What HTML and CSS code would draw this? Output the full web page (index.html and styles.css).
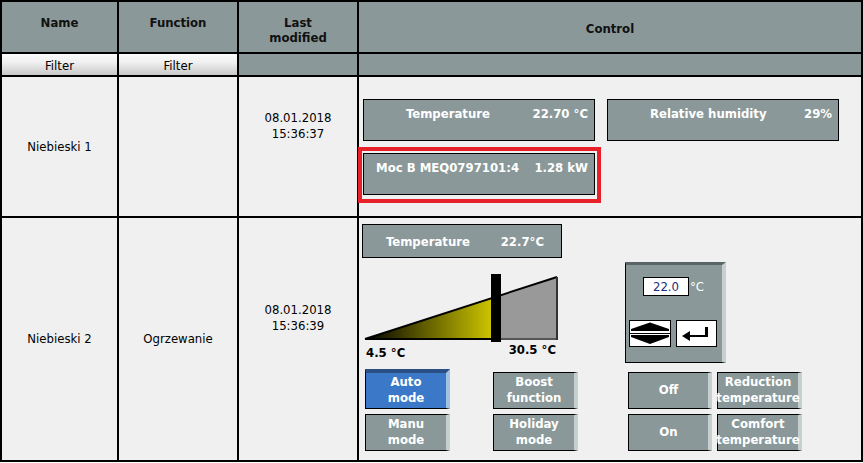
FILE: index.html
```html
<!DOCTYPE html>
<html>
<head>
<meta charset="utf-8">
<link rel="stylesheet" href="styles.css">
</head>
<body>
<div class="grid">
  <div class="hd hd-top">Name</div>
  <div class="hd hd-top">Function</div>
  <div class="hd hd-top">Last<br>modified</div>
  <div class="hd hd-mid">Control</div>

  <div class="filter">Filter</div>
  <div class="filter">Filter</div>
  <div class="hd"></div>
  <div class="hd"></div>

  <div class="cell">Niebieski 1</div>
  <div class="cell"></div>
  <div class="cell"><div class="date">08.01.2018<br>15:36:37</div></div>
  <div class="cell ctl ctl1">
    <div class="boxrow">
      <div class="vbox"><span>Temperature</span><span>22.70 °C</span></div>
      <div class="vbox"><span>Relative humidity</span><span>29%</span></div>
    </div>
    <div class="boxrow second">
      <div class="vbox vbox-moc hl"><span>Moc B MEQ0797101:4</span><span>1.28 kW</span></div>
    </div>
  </div>

  <div class="cell">Niebieski 2</div>
  <div class="cell">Ogrzewanie</div>
  <div class="cell"><div class="date">08.01.2018<br>15:36:39</div></div>
  <div class="cell ctl ctl2">
    <div class="tbox"><span>Temperature</span><span>22.7°C</span></div>
    <div class="rowb">
      <svg class="slider" width="200" height="101" viewBox="0 0 200 101">
        <defs>
          <linearGradient id="yg" x1="3" y1="0" x2="129" y2="0" gradientUnits="userSpaceOnUse">
            <stop offset="0" stop-color="#000000"/>
            <stop offset="1" stop-color="#cbc300"/>
          </linearGradient>
        </defs>
        <polygon points="3,77 129,36.3 129,77" fill="url(#yg)"/>
        <polygon points="139,33.1 195,15 195,77 139,77" fill="#999999"/>
        <line x1="3" y1="77" x2="195" y2="15" stroke="#000" stroke-width="2"/>
        <line x1="3" y1="77" x2="139" y2="77" stroke="#000" stroke-width="2"/>
        <line x1="139" y1="77" x2="195" y2="77" stroke="#555" stroke-width="2"/>
        <line x1="195" y1="15" x2="195" y2="78" stroke="#333" stroke-width="2"/>
        <rect x="129" y="12" width="10" height="68" fill="#000"/>
        <text class="slbl" x="4" y="95">4.5 °C</text>
        <text class="slbl" x="194" y="92" text-anchor="end">30.5 °C</text>
      </svg>
      <div class="sp">
        <div class="sp-row"><div class="sp-input">22.0</div><span class="sp-unit">°C</span></div>
        <div class="sp-btns">
          <svg width="42" height="27" viewBox="0 0 42 27">
            <rect x="0.5" y="0.5" width="41" height="26" fill="#fff" stroke="#000"/>
            <line x1="0" y1="13.5" x2="42" y2="13.5" stroke="#000"/>
            <polygon points="2,9 21,2.5 40,9 40,11 2,11" fill="#000"/>
            <polygon points="2,15 40,15 40,17 21,24 2,17" fill="#000"/>
          </svg>
          <svg width="41" height="27" viewBox="0 0 41 27">
            <rect x="0.5" y="0.5" width="40" height="26" fill="#fff" stroke="#000"/>
            <rect x="29" y="7" width="3" height="10" fill="#000"/>
            <rect x="13" y="15" width="19" height="2" fill="#000"/>
            <polygon points="6,16 14,11 14,21" fill="#000"/>
          </svg>
        </div>
      </div>
    </div>
    <div class="btns">
      <div class="bgroup">
        <div class="btn btn-active">Auto<br>mode</div>
        <div class="btn">Manu<br>mode</div>
      </div>
      <div class="bgroup g2">
        <div class="btn">Boost<br>function</div>
        <div class="btn">Holiday<br>mode</div>
      </div>
      <div class="bgrid">
        <div class="btn btn-narrow">Off</div>
        <div class="btn">Reduction<br>temperature</div>
        <div class="btn btn-narrow">On</div>
        <div class="btn">Comfort<br>temperature</div>
      </div>
    </div>
  </div>
</div>
</body>
</html>
```
FILE: styles.css
```css
html, body {
  margin: 0;
  padding: 0;
  background: #ffffff;
}

body {
  font-family: "DejaVu Sans Condensed", "DejaVu Sans", sans-serif;
  font-size: 13px;
  color: #000;
}

.grid {
  display: grid;
  grid-template-columns: 115px 118px 118px 502px;
  grid-template-rows: 50px 21px 139px 242px;
  gap: 2px;
  padding: 2px;
  background: #000;
  width: max-content;
}

.hd {
  background: #8a9899;
  font-weight: bold;
  text-align: center;
  color: #111;
}

.hd-top {
  padding-top: 13px;
  line-height: 15px;
}

.hd-mid {
  display: flex;
  align-items: center;
  justify-content: center;
  padding-top: 2px;
}

.filter {
  background: linear-gradient(#fbfbfb, #f0f0f0 40%, #c9c9c9);
  text-align: center;
  line-height: 21px;
  padding-top: 1px;
  box-sizing: border-box;
}

.cell {
  background: #f0f0f0;
  display: flex;
  align-items: center;
  justify-content: center;
  text-align: center;
  line-height: 16px;
}

.date {
  padding-bottom: 42px;
}

.ctl {
  display: block;
  text-align: left;
}

.ctl1 {
  padding: 22px 0 0 4px;
}

.boxrow {
  display: flex;
  gap: 12px;
}

.boxrow.second {
  margin-top: 12px;
}

.vbox {
  box-sizing: border-box;
  width: 232px;
  height: 42px;
  border: 1px solid #000;
  background: #8a9899;
  color: #fff;
  font-weight: bold;
  line-height: 16px;
  display: flex;
  justify-content: space-between;
  gap: 6px;
  padding: 6px 6px 0 42px;
  white-space: nowrap;
}

.vbox-moc {
  padding-left: 12px;
}

.hl {
  position: relative;
}

.hl::after {
  content: "";
  position: absolute;
  left: -6px;
  top: -7px;
  right: -7px;
  bottom: -9px;
  border: 4px solid #e8202a;
}

.ctl2 {
  padding: 6px 0 0 3px;
}

.tbox {
  box-sizing: border-box;
  width: 200px;
  height: 34px;
  border: 1px solid #000;
  background: #8a9899;
  color: #fff;
  font-weight: bold;
  display: flex;
  align-items: center;
  justify-content: space-between;
  padding: 1px 17px 0 23px;
  white-space: nowrap;
}

.rowb {
  display: flex;
  margin-top: 4px;
}

.slider {
  display: block;
}

.slbl {
  font-family: "DejaVu Sans Condensed", "DejaVu Sans", sans-serif;
  font-size: 13px;
  font-weight: bold;
  fill: #000;
}

.sp {
  box-sizing: border-box;
  width: 101px;
  height: 101px;
  margin-left: 63px;
  background: #8a9899;
  border-top: 3px solid #5c6566;
  border-left: 1px solid #000;
  border-bottom: 1px solid #000;
  border-right: 4px solid #c9cecf;
  padding: 12px 0 0 17px;
}

.sp-row {
  display: flex;
  align-items: center;
}

.sp-input {
  box-sizing: border-box;
  width: 46px;
  height: 19px;
  border: 1px solid #000;
  background: #fff;
  color: #1a2f78;
  text-align: center;
  line-height: 17px;
}

.sp-unit {
  margin-left: 1px;
  color: #fff;
}

.sp-btns {
  display: flex;
  gap: 5px;
  margin-top: 24px;
  margin-left: -14px;
}

.sp-btns svg {
  display: block;
}

.btns {
  display: flex;
  align-items: flex-end;
  margin-top: 6px;
  padding-left: 3px;
}

.bgroup {
  display: flex;
  flex-direction: column;
  gap: 5px;
}

.g2 {
  margin-left: 43px;
}

.bgrid {
  display: grid;
  grid-template-columns: 84px 85px;
  gap: 5px;
  margin-left: 50px;
}

.btn {
  box-sizing: border-box;
  width: 85px;
  height: 37px;
  background: #8a9899;
  border-top: 1px solid #000;
  border-left: 1px solid #000;
  border-bottom: 1px solid #000;
  border-right: 4px solid #c8cfcf;
  color: #fff;
  font-weight: bold;
  line-height: 16px;
  text-align: center;
  display: flex;
  align-items: center;
  justify-content: center;
  white-space: nowrap;
  padding-bottom: 2px;
}

.btn-narrow {
  width: 84px;
}

.btn-active {
  height: 40px;
  background: #3b78c8;
  border-top: 4px solid #2a4f85;
  border-right-color: #a3c2e3;
}
```
